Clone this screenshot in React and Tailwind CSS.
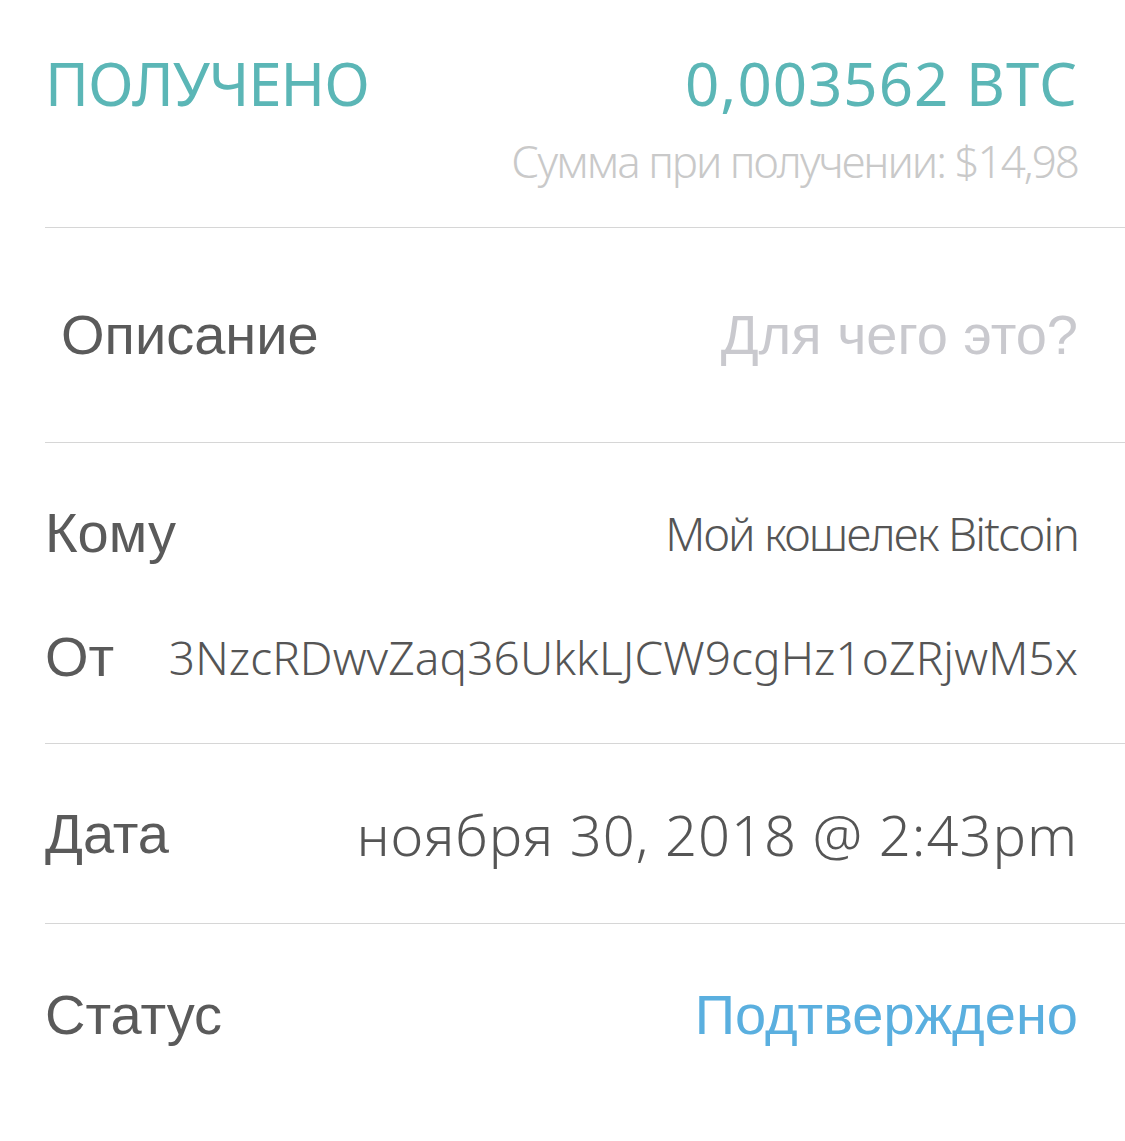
import React from "react";

const mont = { fontFamily: '"Noto Sans", "Open Sans", sans-serif' };
const helv = { fontFamily: '"Liberation Sans", Arial, sans-serif' };

function Row({ className = "", children }) {
    return (
        <div className={"flex items-center justify-between border-b border-[#d6d6d6] pr-[47px] " + className}>
            {children}
        </div>
    );
}

export default function App() {
    return (
        <div className="w-[1125px] h-[1141px] bg-white overflow-hidden">
            <div className="ml-[45px]">
                {/* Header */}
                <div className="h-[228px] border-b border-[#d6d6d6] pr-[47px] pt-[53px]">
                    <div className="flex items-center justify-between leading-none">
                        <span className="text-[60px] text-[#5bb6b6] tracking-[-1px]" style={mont}>ПОЛУЧЕНО</span>
                        <span className="text-[60px] text-[#5bb6b6] tracking-[1px]" style={mont}>0,003562 BTC</span>
                    </div>
                    <div className="flex justify-end mt-[26px] leading-none">
                        <span className="text-[44px] font-light text-[#c9c9c9] tracking-[-2px]" style={mont}>Сумма при получении: $14,98</span>
                    </div>
                </div>

                {/* Description */}
                <Row className="h-[215px]">
                    <span className="pl-[16px] text-[56px] text-[#5a5a5a]" style={helv}>Описание</span>
                    <span className="text-[56px] text-[#c9c9ce]" style={helv}>Для чего это?</span>
                </Row>

                {/* To / From */}
                <div className="h-[301px] border-b border-[#d6d6d6] pr-[47px] flex flex-col justify-center gap-[68px] pt-[4px]">
                    <div className="flex items-center justify-between leading-none">
                        <span className="text-[56px] text-[#5a5a5a]" style={helv}>Кому</span>
                        <span className="text-[46px] font-light text-[#555555] tracking-[-1.8px]" style={mont}>Мой кошелек Bitcoin</span>
                    </div>
                    <div className="flex items-center justify-between leading-none">
                        <span className="text-[56px] text-[#5a5a5a]" style={helv}>От</span>
                        <span className="text-[46px] font-light text-[#555555] tracking-[0.1px]" style={mont}>3NzcRDwvZaq36UkkLJCW9cgHz1oZRjwM5x</span>
                    </div>
                </div>

                {/* Date */}
                <Row className="h-[180px]">
                    <span className="text-[56px] text-[#5a5a5a]" style={helv}>Дата</span>
                    <span className="text-[56px] font-light text-[#555555] tracking-[1px]" style={mont}>ноября 30, 2018 @ 2:43pm</span>
                </Row>

                {/* Status */}
                <div className="h-[182px] pr-[47px] flex items-center justify-between">
                    <span className="text-[56px] text-[#5a5a5a]" style={helv}>Статус</span>
                    <span className="text-[56px] text-[#5aafdf]" style={helv}>Подтверждено</span>
                </div>
            </div>
        </div>
    );
}
